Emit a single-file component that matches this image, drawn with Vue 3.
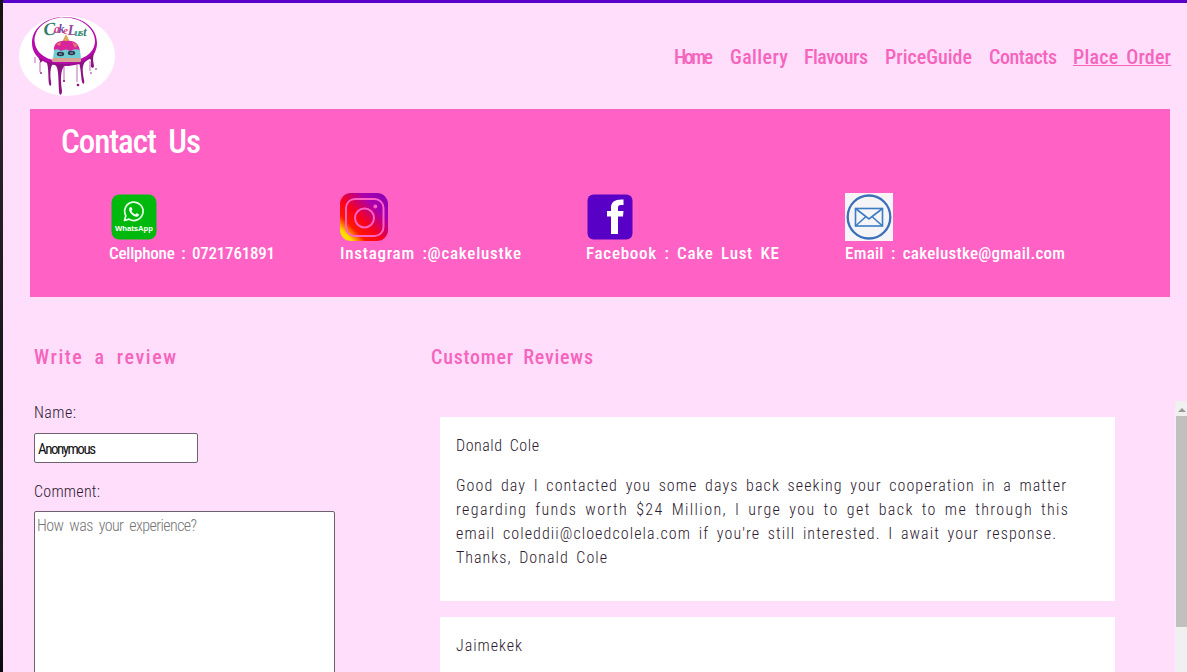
<script setup>
const FAMILY = '"Roboto Condensed", "Open Sans Condensed", sans-serif'
const pen = document.createElement('canvas').getContext('2d')

// Letter spacing that sets a line of text to the given width.
function fit(text, size, weight, width, gap = 3) {
  pen.font = `${weight} ${size}px ${FAMILY}`
  const spaces = text.split(' ').length - 1
  const free = width - pen.measureText(text).width - spaces * gap
  return { letterSpacing: (free / (text.length - 1)).toFixed(3) + 'px', wordSpacing: gap + 'px' }
}

const nav = [
  { text: 'Home', box: 56, width: 39 },
  { text: 'Gallery', box: 74, width: 58 },
  { text: 'Flavours', box: 81, width: 64 },
  { text: 'PriceGuide', box: 104, width: 87 },
  { text: 'Contacts', box: 84, width: 68 },
  { text: 'Place Order', box: 98, width: 98, active: true }
]
const contacts = [
  { icon: 'whatsapp', text: 'Cellphone : 0721761891', width: 166 },
  { icon: 'instagram', text: 'Instagram :@cakelustke', width: 181 },
  { icon: 'facebook', text: 'Facebook : Cake Lust KE', width: 193 },
  { icon: 'email', text: 'Email : cakelustke@gmail.com', width: 220 }
]
const reviews = [
  {
    name: 'Donald Cole', width: 83,
    lines: [
      { text: 'Good day I contacted you some days back seeking your cooperation in a matter', width: 610 },
      { text: 'regarding funds worth $24 Million, I urge you to get back to me through this', width: 612 },
      { text: "email coleddii@cloedcolela.com if you're still interested. I await your response.", width: 600 },
      { text: 'Thanks, Donald Cole', width: 151 }
    ]
  },
  { name: 'Jaimekek', width: 66, lines: [] }
]
</script>

<template>
  <div class="screen">
    <div class="edge"></div>
    <div class="page">
      <header class="header">
        <svg class="logo" viewBox="19 15 96 81">
          <ellipse cx="67" cy="56" rx="48" ry="40" fill="#fff" />
          <path fill="#b80bac" fill-rule="evenodd" d="M64.500 17C46 17 32 28 32 43C32 57 45 66 65 66C84 66 97 57 97 43C97 28 83 17 64.500 17ZM64.500 17.600C82 17.600 95 29 95 41C95 54 81 61.500 65 61.500C48 61.500 35 54 34.500 40C35 28 47 17.600 64.500 17.600Z" />
          <path fill="#8d1282" d="M38 57C40 60 40 63 41 62.500C43 60 44 59 46 61C49 65 48 79 49 84C50 87 52 86 51 82C50 75 50 67 53 64C59 65 58 74 59 91C59 96 62 96 62 91C60 77 61 67 66 65C72 66 75 64 79 63C81 69 81 77 82 82C83 85 85 84 84 80C82 69 82 64 87 60C92 57 91 61 91 65C90 68 94 69 94 66C93 60 92 56 96 50C88 61 80 64 65 64C50 64 45 61 38 57Z" />
          <g stroke="#a02a96" stroke-width=".7" fill="none"><path d="M35 57V63M40 62V72M64 65V82M77 65V82M90 61V71" /></g>
          <g fill="#8d1282"><circle cx="41" cy="73" r=".9" /><circle cx="64" cy="81" r="1" /><circle cx="78" cy="85" r="1.300" /><circle cx="96" cy="69" r=".8" /><circle cx="91" cy="73" r=".8" /></g>
          <path d="M66 34L61 44H71Z" fill="#e0a45c" />
          <path d="M54 51C53 44 58 40 66 41C76 40 79 45 80 51Z" fill="#d9259a" />
          <path d="M56 44L61 42L60 46ZM72 42L78 45L75 48Z" fill="#e9736f" />
          <path d="M54 50Q58 48 61 51Q66 48 70 51Q75 48 80 50L81 59H53Z" fill="#72cdd2" />
          <rect x="52" y="58" width="29" height="4" rx="1.500" fill="#d8a294" />
          <ellipse cx="60.500" cy="54" rx="3.700" ry="2.200" fill="#283b50" /><ellipse cx="71.500" cy="53" rx="3.700" ry="2.200" fill="#283b50" />
          <path d="M59 54H62M70 53H73" stroke="#9bb8bd" />
          <g class="brand" text-anchor="middle">
            <text x="49.500" y="35" font-size="18" fill="#397b6d" transform="rotate(-5 49 30)">C</text>
            <text x="57" y="33" font-size="12" fill="#d33c87">a</text>
            <text x="61.500" y="32.500" font-size="12" fill="#7545a8">k</text>
            <text x="65.500" y="33.500" font-size="11" fill="#d8447a">e</text>
            <text x="72" y="35" font-size="14" fill="#9645a0">L</text>
            <text x="77.500" y="36" font-size="11" fill="#2b9d8b">u</text>
            <text x="81.500" y="36" font-size="11" fill="#398b65">s</text>
            <text x="85" y="36" font-size="12" fill="#397b6d">t</text>
          </g>
        </svg>
        <nav class="nav">
          <div v-for="n in nav" :key="n.text" :style="{ width: n.box + 'px' }">
            <a :class="{ active: n.active }" :style="fit(n.text, 20, 500, n.width)">{{ n.text }}</a>
          </div>
        </nav>
      </header>

      <section class="contact">
        <h1 :style="fit('Contact Us', 33, 500, 140, 6)">Contact Us</h1>
        <ul class="channels">
          <li v-for="c in contacts" :key="c.icon">
            <svg v-if="c.icon === 'whatsapp'" viewBox="0 0 48 48">
              <rect x="2.500" y="1.500" width="45" height="45" rx="8" fill="#00b90c" />
              <path d="M15.500 27.500L16.800 22.700A9.200 9.200 0 1 1 20 26.100Z" fill="none" stroke="#e9ffe9" stroke-width="1.700" stroke-linejoin="round" />
              <path d="M20.800 14.500C21.400 13.600 22.300 13.800 22.600 14.500L23.400 16.300C23.500 17 22.600 17.500 22.500 18C23.300 19.700 24.600 20.800 26.100 21.300C26.800 21.200 27.200 20 27.800 20.200L29.800 21.200C30.400 21.800 29.300 23.700 27.500 23.800C24.300 23.700 20.400 19.700 20.100 16.800C20.100 15.900 20.300 15.100 20.800 14.500Z" fill="#fff" />
              <text x="25" y="37.500" text-anchor="middle" textLength="38" lengthAdjust="spacingAndGlyphs" class="mark">WhatsApp</text>
            </svg>
            <svg v-else-if="c.icon === 'instagram'" viewBox="0 0 48 48">
              <defs>
                <linearGradient id="ig" x1="0" y1="1" x2="1" y2="0">
                  <stop offset="0" stop-color="#ffe900" /><stop offset=".13" stop-color="#ffd900" /><stop offset=".27" stop-color="#ff1a00" />
                  <stop offset=".46" stop-color="#f7001f" /><stop offset=".72" stop-color="#aa00ae" /><stop offset="1" stop-color="#8500b4" />
                </linearGradient>
              </defs>
              <rect width="48" height="48" rx="11" fill="url(#ig)" />
              <g fill="none" stroke="#ff61c5" stroke-width="2"><rect x="6" y="6" width="37.500" height="37" rx="9" /><circle cx="24.500" cy="25" r="9.500" /></g>
              <circle cx="35.300" cy="13.500" r="1.900" fill="#ff61c5" />
            </svg>
            <svg v-else-if="c.icon === 'facebook'" viewBox="0 0 48 48">
              <rect x="1.500" y="1.500" width="45" height="45" rx="6" fill="#5800c5" />
              <path d="M25 41V23.500H21V18H25V14.500C25 9 29 6 37.500 6.500V12H35C32.500 12 32 13 32 15V18H37.500L37 23.500H32V41Z" fill="#fff" />
            </svg>
            <svg v-else viewBox="0 0 48 48">
              <rect width="48" height="48" fill="#f5f4f7" />
              <ellipse cx="24" cy="24" rx="21.300" ry="21.500" fill="none" stroke="#3b6fb9" stroke-width="2.300" />
              <g fill="none" stroke="#3b7cc4" stroke-width="1.600"><rect x="10.500" y="15.500" width="27" height="17.500" /><path d="M10.500 15.500L24 26L37.500 15.500M10.500 33L20.500 24M37.500 33L27.500 24" /></g>
            </svg>
            <span :style="fit(c.text, 17, 500, c.width)">{{ c.text }}</span>
          </li>
        </ul>
      </section>

      <main class="columns">
        <section class="form">
          <h2 :style="fit('Write a review', 20, 500, 142, 5)">Write a review</h2>
          <label :style="fit('Name:', 16, 300, 42)">Name:</label>
          <div class="input" :style="fit('Anonymous', 15, 400, 58)">Anonymous</div>
          <label :style="fit('Comment:', 16, 300, 66)">Comment:</label>
          <div class="textarea" :style="fit('How was your experience?', 16, 300, 160)">How was your experience?</div>
        </section>
        <section class="reviews">
          <h2 :style="fit('Customer Reviews', 20, 500, 162, 4)">Customer Reviews</h2>
          <div class="scroller">
            <div class="cards">
              <article v-for="r in reviews" :key="r.name">
                <p :style="fit(r.name, 16, 300, r.width)">{{ r.name }}</p>
                <div class="comment">
                  <div v-for="l in r.lines" :key="l.text" :style="fit(l.text, 16, 300, l.width)">{{ l.text }}</div>
                </div>
              </article>
            </div>
            <div class="track"><div class="arrow"></div><div class="thumb"></div></div>
          </div>
        </section>
      </main>
    </div>
  </div>
</template>

<style>
body { overflow: hidden; }
</style>

<style scoped>
* { box-sizing: border-box; margin: 0; padding: 0; }
.screen { display: flex; width: 1187px; height: 672px; overflow: hidden; background: #ffdefb; color: #2c1a30; font: 300 16px/24px "Roboto Condensed", "Open Sans Condensed", sans-serif; white-space: nowrap; }
.edge { width: 3px; flex: none; background: linear-gradient(#14110f, #29242a 18%, #181519 60%, #211c25 82%, #0d0a0f); }
.page { width: 1184px; flex: none; border-top: 3px solid #5a00cb; }
.header { display: flex; justify-content: space-between; align-items: flex-start; height: 106px; padding: 12px 16px 0 16px; }
.logo { width: 96px; height: 81px; }
.brand { font-family: "Liberation Serif", serif; font-style: italic; font-weight: 700; }
.nav { display: flex; margin-top: 28px; font-size: 20px; font-weight: 500; line-height: 28px; color: #f565bd; }
.active { text-decoration: underline; text-decoration-thickness: 1px; text-underline-offset: 1px; }
.contact { width: 1140px; height: 188px; margin-left: 27px; padding: 11px 31px; background: #ff61c5; color: #fff; }
h1 { font-size: 33px; line-height: 44px; font-weight: 500; }
.channels { display: grid; grid-template-columns: 231px 246px 259px 225px; margin: 29px 0 0 48px; list-style: none; font-size: 17px; font-weight: 500; line-height: 24px; }
.channels svg { display: block; width: 48px; height: 48px; }
.mark { font: 700 8px "Liberation Sans", sans-serif; fill: #fff; letter-spacing: 0; word-spacing: 0; }
.columns { display: grid; grid-template-columns: 397px 1fr; padding: 46px 0 0 31px; }
h2 { font-size: 20px; line-height: 28px; font-weight: 500; color: #f565bd; }
.form h2 { margin-bottom: 30px; }
label { display: block; }
.input { width: 164px; height: 30px; margin: 8px 0 17px; padding: 0 3px; border: 1px solid #6d626d; border-radius: 2px; background: #fff; color: #111; font-size: 15px; font-weight: 400; line-height: 30px; }
.textarea { width: 301px; height: 190px; margin-top: 7px; padding: 2px; border: 1px solid #6d626d; border-radius: 2px; background: #fff; color: #757575; }
.scroller { display: flex; justify-content: space-between; height: 271px; margin-top: 30px; }
.cards { width: 675px; margin: 16px 0 0 9px; }
article { height: 184px; margin-bottom: 16px; padding: 17px 16px 15px; background: #fff; }
.comment { margin-top: 16px; }
.track { width: 12px; padding-left: 1px; background: #f1f0f1; }
.arrow { width: 8px; height: 4px; margin: 7px 0 4px 2px; background: #9b9a96; clip-path: polygon(50% 0, 100% 100%, 0 100%); }
.thumb { height: 211px; background: #c1c0bf; }
</style>
